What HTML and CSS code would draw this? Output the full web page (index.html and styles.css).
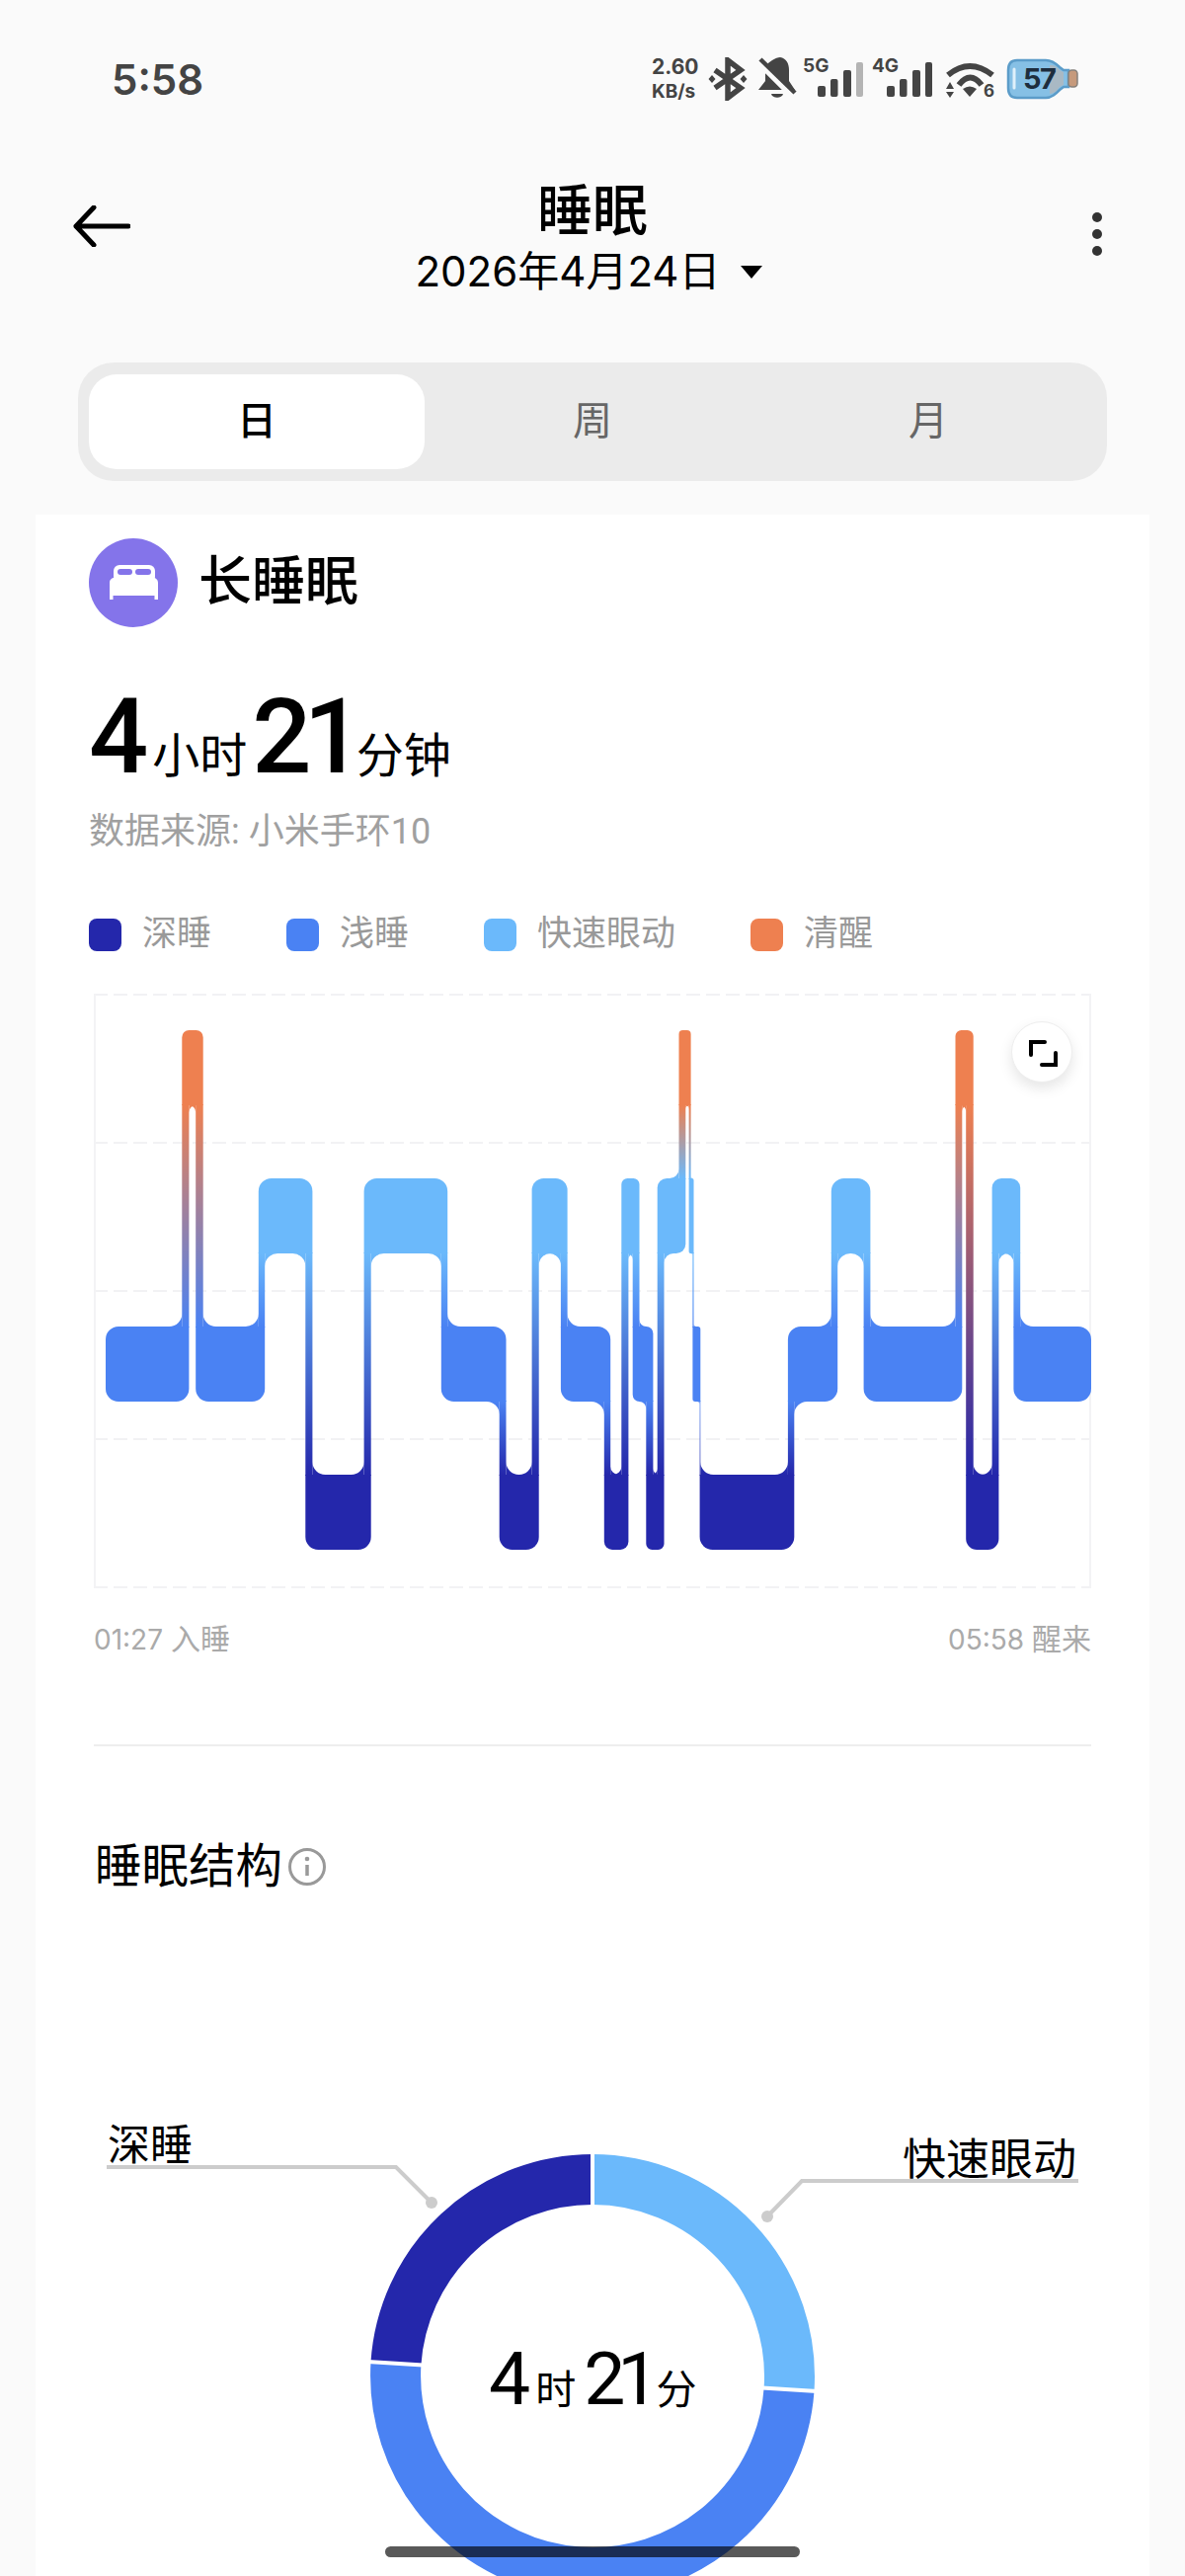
FILE: index.html
```html
<!DOCTYPE html>
<html lang="zh-CN">
<head>
  <meta charset="UTF-8">
  <meta name="viewport" content="width=device-width, initial-scale=1.0">
  <title>睡眠</title>
  <link rel="stylesheet" href="styles.css">
</head>
<body>
  <div class="status-bar">
    <span class="clock">5:58</span>
    <div class="status-icons">
      <div class="speed"><span>2.60</span><span class="speed-unit">KB/s</span></div>
      <svg class="ic-bt" width="40" height="44" viewBox="0 0 40 44">
        <path d="M7 13L33 31 20 41V3L33 13 7 31" fill="none" stroke="#444" stroke-width="5.500"/>
        <path d="M4 18l3.500 4L4 26 .5 22zM36 18l3.500 4-3.500 4-3.500-4z" fill="#444"/>
      </svg>
      <svg class="ic-bell" width="40" height="44" viewBox="0 0 40 44">
        <path d="M14 3C17 1 20 0 22 0c6 1 9 6 9 13v11l6 9H0l7-9V12c0-3 2-6 7-9z" fill="#444"/>
        <path d="M13 37h12c-1 5-11 5-12 0z" fill="#444"/>
        <path d="M0 5l35 35" stroke="#fafafa" stroke-width="6"/>
        <path d="M2 2l35 34" stroke="#444" stroke-width="4.500"/>
      </svg>
      <div class="sig">
        <span class="sig-label">5G</span>
        <svg width="47" height="36" viewBox="0 0 47 36">
          <rect x="1" y="25" width="8" height="11" rx="2" fill="#444"/>
          <rect x="14" y="18" width="7.500" height="18" rx="2" fill="#444"/>
          <rect x="27" y="9" width="8" height="27" rx="2" fill="#444"/>
          <rect x="40" y="1" width="7" height="35" rx="2" fill="#b4b4b4"/>
        </svg>
      </div>
      <div class="sig">
        <span class="sig-label">4G</span>
        <svg width="47" height="36" viewBox="0 0 47 36">
          <rect x="1" y="25" width="8" height="11" rx="2" fill="#444"/>
          <rect x="14" y="18" width="7.500" height="18" rx="2" fill="#444"/>
          <rect x="27" y="9" width="8" height="27" rx="2" fill="#444"/>
          <rect x="40" y="1" width="7" height="35" rx="2" fill="#444"/>
        </svg>
      </div>
      <div class="wifi">
        <svg width="49" height="42" viewBox="0 0 49 42">
          <path d="M2 17Q24 -1 47 17" fill="none" stroke="#444" stroke-width="6"/>
          <path d="M13 27Q24.500 12 36 27" fill="none" stroke="#444" stroke-width="6"/>
          <path d="M17 31Q24 26 31 31L24 39z" fill="#444"/>
          <path d="M4 24l4 7H0zM0 34h8l-4 6z" fill="#444"/>
        </svg>
        <span class="wifi-six">6</span>
      </div>
      <div class="battery">
        <svg width="73" height="42" viewBox="0 0 73 42">
          <path d="M11 2h29c6 0 10 3 14 7l4 3h5v17h-5l-4 3c-4 4-8 8-14 8H11C5 40 2 36 2 30V12C2 6 5 2 11 2z" fill="#86c0e5" stroke="#5b9cc9" stroke-width="2.500"/>
          <path d="M44 7c5 0 8 2 10 5l4 2v13l-4 2c-2 3-5 7-10 7z" fill="#a9b9c4"/>
          <rect x="63" y="12" width="9" height="17" rx="3.500" fill="#c69a7c" stroke="#86817c" stroke-width="1.500"/>
          <path d="M8 11v19" stroke="#dff0fa" stroke-width="3" stroke-linecap="round"/>
        </svg>
        <span class="batt-num">57</span>
      </div>
    </div>
  </div>

  <header class="topbar">
    <svg class="back" width="58" height="42" viewBox="0 0 58 42">
      <path d="M21 2L3 21l18 19M3 21h53" fill="none" stroke="#000" stroke-width="5" stroke-linecap="round" stroke-linejoin="round"/>
    </svg>
    <div class="topbar-center">
      <div class="page-title">睡眠</div>
      <div class="page-date">2026年4月24日<span class="caret"></span></div>
    </div>
    <div class="more"><i></i><i></i><i></i></div>
  </header>

  <div class="tabs">
    <div class="tab tab-active">日</div>
    <div class="tab">周</div>
    <div class="tab">月</div>
  </div>

  <main class="card">
    <div class="card-head">
      <svg width="90" height="90" viewBox="0 0 90 90">
        <circle cx="45" cy="45" r="45" fill="#8474ea"/>
        <rect x="25" y="27" width="42" height="18" rx="6" fill="#fff"/>
        <rect x="29" y="31" width="15" height="6" rx="3" fill="#8474ea"/>
        <rect x="47" y="31" width="16" height="6" rx="3" fill="#8474ea"/>
        <path d="M26 40h39c3 0 5 2 5 5v17h-3.500v-4H24.500v4H21V45c0-3 2-5 5-5z" fill="#fff"/>
      </svg>
      <h2 class="card-title">长睡眠</h2>
    </div>

    <div class="total">
      <span class="total-num">4</span><span class="total-unit">小时</span><span class="total-num total-num-2">21</span><span class="total-unit total-unit-2">分钟</span>
    </div>
    <div class="source">数据来源: 小米手环10</div>

    <ul class="legend">
      <li><span class="dot dot-deep"></span>深睡</li>
      <li><span class="dot dot-light"></span>浅睡</li>
      <li><span class="dot dot-rem"></span>快速眼动</li>
      <li><span class="dot dot-awake"></span>清醒</li>
    </ul>

    <div class="chart">
      <svg id="stages" width="1010" height="602" viewBox="0 0 1010 602">
        <g class="grid">
          <path d="M0 1H1010M0 151H1010M0 301H1010M0 451H1010M0 601H1010"/>
        </g>
        <path class="frame" d="M1 0V602M1009 0V602"/>
      </svg>
      <button class="expand">
        <svg width="62" height="62" viewBox="0 0 62 62">
          <path d="M19 33V20h14M30 43h14V31" fill="none" stroke="#000" stroke-width="4" stroke-linecap="round"/>
        </svg>
      </button>
    </div>

    <div class="chart-times">
      <span>01:27 <em>入睡</em></span>
      <span>05:58 <em>醒来</em></span>
    </div>
    <div class="divider"></div>

    <div class="section-title">睡眠结构
      <svg width="40" height="40" viewBox="0 0 40 40">
        <circle cx="20" cy="20" r="17.500" fill="none" stroke="#999" stroke-width="3"/>
        <circle cx="20" cy="12" r="2.300" fill="#999"/>
        <path d="M20 18v11" stroke="#999" stroke-width="3.500"/>
      </svg>
    </div>

    <svg class="donut" width="1128" height="500" viewBox="0 0 1128 500">
      <g transform="translate(564 235)">
        <path d="M0-199.500A199.500 199.500 0 0 1 199.060 13.200" class="arc" stroke="#6bb9fb"/>
        <path d="M199.060 13.200A199.500 199.500 0 0 1-199.060-13.200" class="arc" stroke="#4a82f3"/>
        <path d="M-199.060-13.200A199.500 199.500 0 0 1 0-199.500" class="arc" stroke="#2427ab"/>
        <path d="M0-172V-228M171.600 11.400L227.500 15.100M-171.600-11.400L-227.500-15.100" stroke="#fff" stroke-width="4"/>
        <text x="-105" y="28"><tspan class="dc-num">4</tspan><tspan class="dc-unit" dx="5">时</tspan><tspan class="dc-num dc-num-2" dx="8">21</tspan><tspan class="dc-unit" dx="5">分</tspan></text>
      </g>
      <path class="leader" d="M72 23H365L401 59"/>
      <circle class="leader-dot" cx="401" cy="59" r="6"/>
      <text class="callout" x="73" y="16">深睡</text>
      <path class="leader" d="M1056 37H776L741 73"/>
      <circle class="leader-dot" cx="741" cy="73" r="6"/>
      <text class="callout callout-big" x="878" y="31">快速眼动</text>
    </svg>
  </main>

  <div class="home-bar"></div>
  <script src="chart.js"></script>
</body>
</html>
```

FILE: styles.css
```css
* {
  box-sizing: border-box;
}

body {
  margin: 0;
  width: 1200px;
  height: 2608px;
  overflow: hidden;
  position: relative;
  background: #fafafa;
  color: #000;
  font-family: Roboto, "Noto Sans CJK SC", sans-serif;
}

/* status bar */
.status-bar {
  display: flex;
  justify-content: space-between;
  align-items: center;
  height: 100px;
  padding: 60px 108px 0 113px;
  color: #444;
  font-family: Inter, sans-serif;
}
.clock {
  font-size: 42px;
  font-weight: 600;
}
.status-icons {
  display: flex;
  align-items: center;
  height: 44px;
}
.speed {
  display: flex;
  flex-direction: column;
  width: 47px;
  font-size: 21px;
  font-weight: 700;
  line-height: 25px;
  white-space: nowrap;
}
.speed-unit {
  font-size: 19px;
}
.ic-bt { margin-left: 10px; }
.ic-bell { margin-left: 11px; }
.sig {
  position: relative;
  width: 61px;
  height: 42px;
  margin-left: 9px;
  padding: 3px 0 0 14px;
}
.ic-bell + .sig { margin-left: 5px; }
.sig svg {
  display: block;
}
.sig-label {
  position: absolute;
  left: 0;
  top: -2px;
  font-size: 19px;
  font-weight: 700;
  line-height: 20px;
}
.wifi {
  position: relative;
  width: 49px;
  height: 42px;
  margin-left: 14px;
}
.wifi svg, .battery svg {
  display: block;
}
.wifi-six {
  position: absolute;
  right: 0;
  bottom: 0;
  font-size: 17px;
  font-weight: 700;
  line-height: 18px;
}
.battery {
  position: relative;
  width: 73px;
  height: 42px;
  margin-left: 12px;
}
.batt-num {
  position: absolute;
  left: 17px;
  top: 4px;
  font-size: 29px;
  font-weight: 700;
  line-height: 34px;
  letter-spacing: -1.500px;
  color: #1d2d3d;
}

/* header */
.topbar {
  display: grid;
  grid-template-columns: 1fr auto 1fr;
  align-items: center;
  height: 142px;
  margin-top: 76px;
  padding: 0 84px;
}
.back {
  margin: -36px 0 0 -10px;
}
.topbar-center {
  text-align: center;
  margin-top: -12px;
}
.page-title {
  font-size: 56px;
  font-weight: 500;
  line-height: 68px;
}
.page-date {
  display: flex;
  align-items: center;
  margin-right: 8px;
  font-family: Inter, "Noto Sans CJK SC", sans-serif;
  font-size: 42px;
  line-height: 54px;
}
.caret {
  width: 0;
  height: 0;
  margin-left: 20px;
  border-left: 11px solid transparent;
  border-right: 11px solid transparent;
  border-top: 13px solid #000;
}
.more {
  display: flex;
  flex-direction: column;
  justify-self: end;
  gap: 7px;
  margin-top: -20px;
}
.more i {
  display: block;
  width: 10px;
  height: 10px;
  border-radius: 50%;
  background: #333;
}

/* day / week / month */
.tabs {
  display: flex;
  align-items: center;
  height: 120px;
  margin: 49px 79px 0;
  padding: 0 11px;
  border-radius: 36px;
  background: #ebebeb;
}
.tab {
  flex: 1;
  height: 96px;
  line-height: 96px;
  text-align: center;
  font-size: 40px;
  color: #666;
}
.tab-active {
  background: #fff;
  border-radius: 28px;
  color: #000;
  font-weight: 500;
}

/* main card */
.card {
  height: 2100px;
  margin: 34px 36px 0;
  padding: 24px 54px 0;
  background: #fff;
}
.card-head {
  display: flex;
  align-items: center;
  gap: 21px;
}
.card-title {
  margin: 0;
  font-size: 54px;
  font-weight: 500;
  line-height: 90px;
}
.total {
  display: flex;
  align-items: baseline;
  height: 118px;
  margin-top: 52px;
  line-height: 118px;
}
.total-num {
  font-size: 106px;
  font-weight: 500;
}
.total-num-2 {
  margin-left: 5px;
  letter-spacing: -8px;
}
.total-unit {
  font-size: 48px;
  margin-left: 4px;
}
.total-unit-2 {
  margin-left: 1px;
}
.source {
  margin-top: 13px;
  font-size: 36px;
  line-height: 48px;
  color: #a0a0a0;
}
.legend {
  display: flex;
  gap: 76px;
  margin: 58px 0 0;
  padding: 0;
  list-style: none;
  font-size: 35px;
  line-height: 44px;
  color: #999;
}
.legend li {
  display: flex;
  align-items: center;
  gap: 21px;
}
.dot {
  width: 33px;
  height: 33px;
  border-radius: 8px;
}
.dot-deep { background: #2427ab; }
.dot-light { background: #4a82f3; }
.dot-rem { background: #6bb9fb; }
.dot-awake { background: #ee8050; }

.chart {
  position: relative;
  width: 1010px;
  height: 602px;
  margin: 38px 5px 0;
}
.chart svg {
  display: block;
}
.grid path {
  fill: none;
  stroke: #f2f2f4;
  stroke-width: 2;
  stroke-dasharray: 14 6;
}
.frame {
  fill: none;
  stroke: #f3f3f5;
  stroke-width: 2;
}
.expand {
  position: absolute;
  top: 28px;
  right: 19px;
  width: 62px;
  height: 62px;
  padding: 0;
  border: 1px solid #eee;
  border-radius: 50%;
  background: #fff;
  box-shadow: 0 6px 14px rgba(0, 0, 0, 0.1);
}
.chart-times {
  display: flex;
  justify-content: space-between;
  margin: 31px 5px 0;
  font-family: Inter, "Noto Sans CJK SC", sans-serif;
  font-size: 28px;
  line-height: 40px;
  color: #aaa;
}
.chart-times em {
  font-size: 30px;
  font-style: normal;
}
.divider {
  height: 2px;
  margin: 86px 5px 0;
  background: #eee;
}
.section-title {
  display: flex;
  align-items: center;
  gap: 5px;
  margin: 92px 0 0 6px;
  font-size: 47.500px;
  line-height: 60px;
}
.donut {
  display: block;
  margin: 251px -54px 0;
  overflow: visible;
}
.arc {
  fill: none;
  stroke-width: 51;
}
.leader {
  fill: none;
  stroke: #ccc;
  stroke-width: 4;
}
.leader-dot {
  fill: #ccc;
}
.callout {
  font-size: 43px;
}
.callout-big {
  font-size: 44px;
}
.dc-num {
  font-size: 75px;
}
.dc-num-2 {
  letter-spacing: -8px;
}
.dc-unit {
  font-size: 41px;
}

.home-bar {
  position: absolute;
  left: 390px;
  top: 2578px;
  width: 420px;
  height: 11px;
  border-radius: 6px;
  background: rgba(0, 0, 0, 0.65);
}
```

FILE: chart.js
```js
// sleep stages: [stage, start x, end x] in chart pixels
const segments = [
  ['light', 12, 96.4], ['awake', 89.3, 110.7], ['light', 103.2, 173.2],
  ['rem', 166.8, 221.4], ['deep', 214.3, 280.7], ['rem', 273.6, 358.2],
  ['light', 351.8, 417.5], ['deep', 410.7, 450.7], ['rem', 443.6, 479.6],
  ['light', 472.9, 523.2], ['deep', 516.8, 541.4], ['rem', 534.3, 552.5],
  ['light', 545.7, 566.4], ['deep', 559.3, 577.5], ['rem', 570.7, 599.3],
  ['awake', 592.5, 604.6], ['rem', 602.6, 607.5], ['light', 606.4, 614.3],
  ['deep', 613.6, 709.3], ['light', 702.9, 753.2], ['rem', 746.8, 786.4],
  ['light', 779.6, 879.3], ['awake', 872.5, 890.7], ['deep', 883.2, 916.4],
  ['rem', 909.6, 938.2], ['light', 931.4, 1010]
];
const tops = { awake: 37, rem: 187, light: 337, deep: 487 };
const colors = { awake: '#ee8050', rem: '#6bb9fb', light: '#4a82f3', deep: '#2427ab' };
const BAND = 76;
const NS = 'http://www.w3.org/2000/svg';
const svg = document.getElementById('stages');

function el(name, attrs, parent) {
  const node = document.createElementNS(NS, name);
  Object.keys(attrs).forEach(k => node.setAttribute(k, attrs[k]));
  (parent || svg).appendChild(node);
  return node;
}

function radius(seg) {
  return Math.min(13, (seg[2] - seg[1]) / 3);
}

// block with its own radius per corner, corners that meet a connector stay square
function blockPath(x0, x1, y0, y1, tl, tr, br, bl) {
  return `M${x0 + tl} ${y0}H${x1 - tr}A${tr} ${tr} 0 0 1 ${x1} ${y0 + tr}` +
    `V${y1 - br}A${br} ${br} 0 0 1 ${x1 - br} ${y1}` +
    `H${x0 + bl}A${bl} ${bl} 0 0 1 ${x0} ${y1 - bl}` +
    `V${y0 + tl}A${tl} ${tl} 0 0 1 ${x0 + tl} ${y0}Z`;
}

// little concave corner where a block meets a connector column
function fillet(cx, cy, dx, dy, r, fill) {
  const sweep = dx * dy > 0 ? 0 : 1;
  const d = `M${cx} ${cy + dy * r}L${cx} ${cy}L${cx + dx * r} ${cy}` +
    `A${r} ${r} 0 0 ${sweep} ${cx} ${cy + dy * r}Z`;
  el('path', { d, fill });
}

const defs = el('defs', {});

segments.forEach((seg, i) => {
  const top = tops[seg[0]];
  const r = radius(seg);
  const prev = segments[i - 1];
  const next = segments[i + 1];
  const prevTop = prev ? tops[prev[0]] : top;
  const nextTop = next ? tops[next[0]] : top;

  el('path', {
    d: blockPath(seg[1], seg[2], top, top + BAND,
      prevTop < top ? 0 : r, nextTop < top ? 0 : r,
      nextTop > top ? 0 : r, prevTop > top ? 0 : r),
    fill: colors[seg[0]]
  });

  if (!next) return;

  const going = nextTop > top;
  const upper = going ? seg : next;
  const lower = going ? next : seg;
  const y1 = tops[upper[0]] + BAND;
  const y2 = tops[lower[0]];
  const id = 'link' + i;
  const grad = el('linearGradient', { id, gradientUnits: 'userSpaceOnUse', x1: 0, x2: 0, y1, y2 }, defs);
  el('stop', { offset: 0, 'stop-color': colors[upper[0]] }, grad);
  el('stop', { offset: 1, 'stop-color': colors[lower[0]] }, grad);
  const fill = `url(#${id})`;

  const x0 = next[1];
  const x1 = seg[2];
  el('rect', { x: x0, y: y1 - 1, width: x1 - x0, height: y2 - y1 + 2, fill });

  if (going) {
    fillet(x1, y2, 1, -1, radius(next), fill);
    fillet(x0, y1, -1, 1, r, fill);
  } else {
    fillet(x0, y2, -1, -1, r, fill);
    fillet(x1, y1, 1, 1, radius(next), fill);
  }
});
```
